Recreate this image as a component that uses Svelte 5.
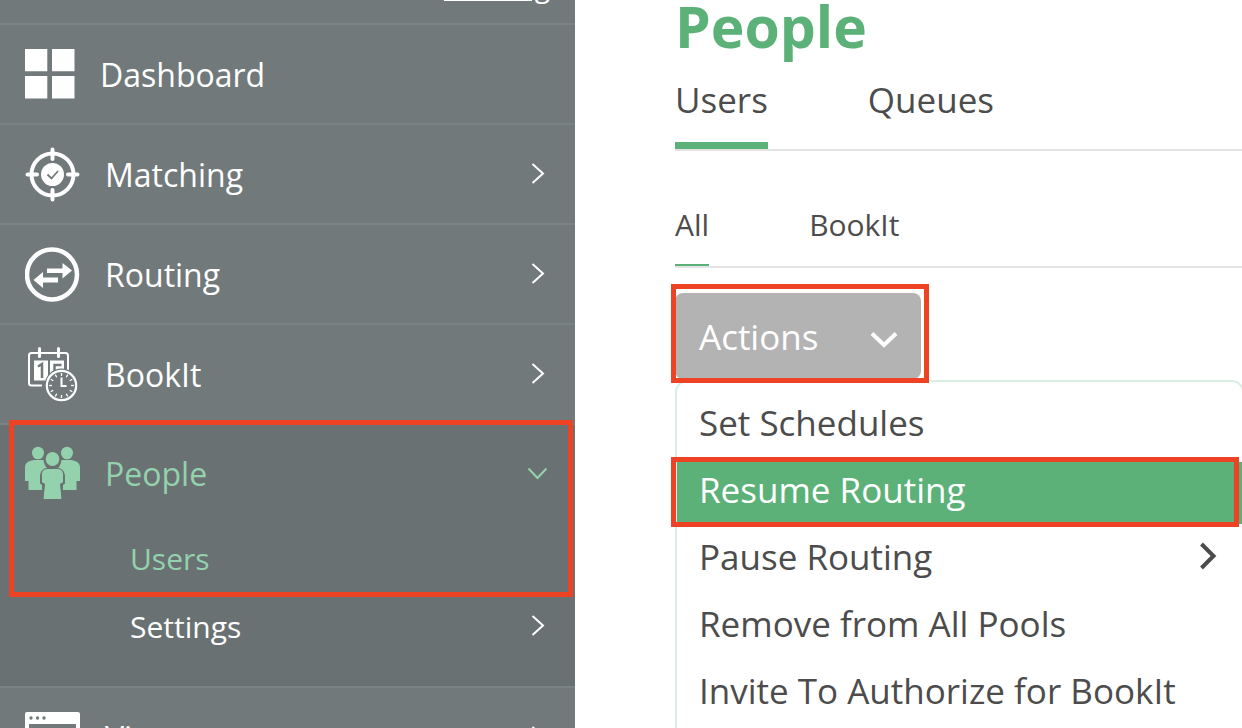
<script>
	const navItems = [
		{ name: 'Dashboard', icon: 'dashboard' },
		{ name: 'Matching', icon: 'matching', expandable: true },
		{ name: 'Routing', icon: 'routing', expandable: true },
		{ name: 'BookIt', icon: 'bookit', expandable: true }
	];

	const tabs = ['Users', 'Queues'];
	const filters = ['All', 'BookIt'];

	const actions = [
		{ name: 'Set Schedules' },
		{ name: 'Resume Routing' },
		{ name: 'Pause Routing', submenu: true },
		{ name: 'Remove from All Pools' },
		{ name: 'Invite To Authorize for BookIt' }
	];

	// Hour marks on the BookIt clock
	const ticks = [0, 30, 60, 90, 120, 150, 180, 210, 240, 270, 300, 330];

	let activeTab = $state('Users');
	let activeFilter = $state('All');
	let activeAction = $state('Resume Routing');
	let menuOpen = $state(true);
</script>

{#snippet arrow()}
	<svg class="arrow" viewBox="0 0 20 22" aria-hidden="true">
		<path d="M4.500 1L15 10.500L4.500 20" />
	</svg>
{/snippet}

{#snippet icon(name)}
	{#if name === 'dashboard'}
		<svg class="icon icon--small" viewBox="0 0 50 50" aria-hidden="true">
			<path fill="currentColor" d="M0 0h22.300v22.300H0zM27 0h22.500v22.300H27zM0 27h22.300v22.500H0zM27 27h22.500v22.500H27z" />
		</svg>
	{:else if name === 'matching'}
		<svg class="icon" viewBox="0 0 55 55" aria-hidden="true">
			<circle cx="27.500" cy="27.500" r="21" fill="none" stroke="currentColor" stroke-width="4" />
			<path d="M27.500 2.500v9.500M27.500 43v9.500M2.500 27.500h9.500M43 27.500h9.500" stroke="currentColor" stroke-width="4" stroke-linecap="round" />
			<circle cx="27.500" cy="27.500" r="11.500" fill="currentColor" />
			<path d="M22.500 27.500l4 4l6.500-7.500" fill="none" stroke="#71797a" stroke-width="1.800" />
		</svg>
	{:else if name === 'routing'}
		<svg class="icon" viewBox="0 0 55 55" aria-hidden="true">
			<circle cx="27" cy="27.500" r="25" fill="none" stroke="currentColor" stroke-width="4.500" />
			<path fill="currentColor" d="M22 21.500h15.500v-5.500l9.500 7.500l-9.500 8v-5.500H22zM33 35.500H18v5.500l-9.500-8l9.500-8v5.500H33z" />
		</svg>
	{:else if name === 'bookit'}
		<svg class="icon" viewBox="0 0 55 55" fill="none" stroke="currentColor" aria-hidden="true">
			<path d="M17 38.500H6.500a2.500 2.500 0 0 1-2.500-2.500V8.500a2.500 2.500 0 0 1 2.500-2.500h34a2.500 2.500 0 0 1 2.500 2.500v15" stroke-width="2" />
			<path d="M14.500 1.500v8M33.500 1.500v8" stroke-width="3" stroke-linecap="round" />
			<path d="M9 13.500h14v20H9zM25 13.500h14v9.500l-8 3l-6 6z" fill="currentColor" stroke="none" />
			<path d="M13 19.500l4-2.500v14M29.500 24v-6h7" stroke="#71797a" stroke-width="2.500" />
			<circle cx="36.500" cy="38.500" r="17" fill="#71797a" stroke="none" />
			<circle cx="36.500" cy="38.500" r="14.700" stroke-width="2.200" />
			<path d="M36.500 30.500v8.500h5" stroke-width="2" />
			{#each ticks as angle}
				<path d="M36.500 26v3" stroke-width="1.300" transform="rotate({angle} 36.500 38.500)" />
			{/each}
		</svg>
	{:else if name === 'people'}
		<svg class="icon" viewBox="0 0 55 55" fill="currentColor" aria-hidden="true">
			<ellipse cx="13" cy="7" rx="6" ry="6.300" />
			<ellipse cx="42" cy="7" rx="6" ry="6.300" />
			<path d="M3.500 44V35H0V21c0-4.500 5-7 11-7h7.500c.5 3.500 1.500 6 3.500 8c-4 1-7 3.500-7 8.500v7l2 1.500v5z" />
			<path d="M51.500 44V35H55V21c0-4.500-5-7-11-7h-7.500c-.5 3.500-1.500 6-3.500 8c4 1 7 3.500 7 8.500v7l-2 1.500v5z" />
			<ellipse cx="27.500" cy="13" rx="6.800" ry="7" />
			<path d="M23 22.500h9c4 0 6.500 2 6.500 6v8l-3 1.500l1.500 15.500H18L19.500 38l-3-1.500v-8c0-4 2.500-6 6.500-6z" stroke="#6a7173" stroke-width="1" />
		</svg>
	{:else if name === 'views'}
		<svg class="icon" viewBox="0 0 55 55" aria-hidden="true">
			<path fill="currentColor" fill-rule="evenodd" d="M2 2h51a2 2 0 0 1 2 2v47a2 2 0 0 1-2 2H2a2 2 0 0 1-2-2V4a2 2 0 0 1 2-2zM4 14v35h47V14z" />
			<g fill="#71797a">
				<circle cx="6" cy="8" r="1.700" />
				<circle cx="12.500" cy="8" r="1.700" />
				<circle cx="19" cy="8" r="1.700" />
			</g>
		</svg>
	{/if}
{/snippet}

<div class="page">
	<nav class="sidebar">
		<div class="sidebar-top">
			<a href="#training">Training</a>
		</div>

		{#each navItems as item}
			<a class="nav-item" href="#{item.icon}">
				{@render icon(item.icon)}
				<span class="nav-name">{item.name}</span>
				{#if item.expandable}
					{@render arrow()}
				{/if}
			</a>
		{/each}

		<div class="nav-section">
			<div class="nav-current highlight">
				<a class="nav-item nav-item--open" href="#people">
					{@render icon('people')}
					<span class="nav-name">People</span>
					<svg class="arrow" viewBox="0 0 20 22" aria-hidden="true">
						<path d="M0.500 5.500L9.500 15L18.500 5.500" />
					</svg>
				</a>
				<a class="sub-item" href="#users">Users</a>
			</div>
			<a class="sub-item" href="#settings">
				<span class="nav-name">Settings</span>
				{@render arrow()}
			</a>
		</div>

		<a class="nav-item" href="#views">
			{@render icon('views')}
			<span class="nav-name">Views</span>
			{@render arrow()}
		</a>
	</nav>

	<main class="content">
		<h1>People</h1>

		<div class="tabs">
			{#each tabs as tab}
				<button class="tab" class:active={activeTab === tab} onclick={() => (activeTab = tab)}>{tab}</button>
			{/each}
		</div>

		<div class="tabs tabs--small">
			{#each filters as filter}
				<button class="tab" class:active={activeFilter === filter} onclick={() => (activeFilter = filter)}>{filter}</button>
			{/each}
		</div>

		<div class="actions highlight">
			<button class="actions-button" aria-expanded={menuOpen} onclick={() => (menuOpen = !menuOpen)}>
				Actions
				<svg class="actions-arrow" viewBox="0 0 28 18" aria-hidden="true">
					<path d="M2 2.500L14 14L26 2.500" />
				</svg>
			</button>
		</div>

		{#if menuOpen}
			<div class="menu">
				{#each actions as action}
					<button
						class="menu-item"
						class:active={activeAction === action.name}
						class:highlight={activeAction === action.name}
						onclick={() => (activeAction = action.name)}
					>
						{action.name}
						{#if action.submenu}
							<svg class="menu-arrow" viewBox="0 0 18 28" aria-hidden="true">
								<path d="M2.500 2L14.500 14L2.500 26" />
							</svg>
						{/if}
					</button>
				{/each}
			</div>
		{/if}
	</main>
</div>

<style>
	:global(body) {
		margin: 0;
		background: #fff;
	}

	.page {
		display: flex;
		height: 100vh;
		overflow: hidden;
		font-family: 'Open Sans', 'Noto Sans', sans-serif;
		color: #4c4c4c;
	}

	button {
		font: inherit;
		color: inherit;
		background: none;
		border: none;
		padding: 0;
		cursor: pointer;
	}

	/* Red callout frame */
	.highlight {
		position: relative;
	}

	.highlight::after {
		content: '';
		position: absolute;
		z-index: 1;
		inset: -5px;
		border: 5px solid #ee4224;
		pointer-events: none;
	}

	.sidebar {
		flex: 0 0 575px;
		background: #71797a;
		color: #fff;
	}

	.sidebar a {
		color: inherit;
	}

	.sidebar-top {
		display: flex;
		justify-content: flex-end;
		align-items: flex-end;
		height: 23px;
		padding-right: 25px;
		border-bottom: 2px solid #7a8384;
		overflow: hidden;
		font-size: 28px;
		line-height: 28px;
	}

	.sidebar-top a {
		margin-bottom: 23px;
	}

	.nav-item,
	.sub-item {
		display: flex;
		align-items: center;
		padding-right: 27px;
		text-decoration: none;
	}

	.nav-item {
		height: 98px;
		padding-left: 25px;
		gap: 25px;
		border-bottom: 2px solid #7a8384;
		font-size: 32px;
	}

	.nav-item--open {
		height: 97px;
		border-bottom-color: transparent;
	}

	.nav-name {
		flex: 1;
	}

	.nav-section {
		padding-bottom: 26px;
		background: #6a7173;
		border-bottom: 2px solid #7a8384;
	}

	.nav-current {
		color: #94d1ad;
	}

	.nav-current::after {
		inset: -5px 2px -5px 9px;
	}

	.sub-item {
		height: 68px;
		padding-left: 130px;
		font-size: 30px;
	}

	.icon {
		flex: none;
		width: 55px;
		height: 55px;
	}

	.icon--small {
		width: 50px;
		height: 50px;
	}

	.arrow {
		flex: none;
		width: 20px;
		height: 22px;
		fill: none;
		stroke: currentColor;
		stroke-width: 2;
	}

	.content {
		flex: 1;
		min-width: 0;
		padding-left: 100px;
	}

	h1 {
		margin: 0;
		padding-bottom: 4px;
		font-size: 57px;
		line-height: 52px;
		color: #5bb177;
	}

	.tabs {
		display: flex;
		gap: 100px;
		border-bottom: 2px solid #e4e4e4;
		font-size: 35px;
	}

	.tab {
		height: 93px;
		border-bottom: 7px solid transparent;
	}

	.tabs--small {
		font-size: 30px;
	}

	.tabs--small .tab {
		height: 115px;
		padding-top: 34px;
		border-bottom-width: 2px;
	}

	.tab.active {
		border-bottom-color: #5bb177;
	}

	.actions {
		width: 246px;
		margin-top: 25px;
	}

	.actions::after {
		inset: -9px -8px -4px -4px;
	}

	.actions-button {
		display: flex;
		align-items: center;
		justify-content: space-between;
		width: 100%;
		height: 86px;
		padding: 0 23px 0 24px;
		border-radius: 8px;
		background: #b3b3b3;
		color: #fff;
		font-size: 35px;
	}

	.actions-arrow {
		width: 28px;
		height: 18px;
		margin-top: 8px;
		fill: none;
		stroke: #fff;
		stroke-width: 4;
	}

	.menu {
		display: flex;
		flex-direction: column;
		gap: 5px;
		margin: 1px -2px 0 0;
		padding: 13px 0;
		border: 2px solid #d9efe3;
		border-radius: 12px;
	}

	.menu-item {
		display: flex;
		align-items: center;
		justify-content: space-between;
		height: 62px;
		padding: 0 25px 8px 22px;
		font-size: 35px;
		white-space: nowrap;
	}

	.menu-item.active {
		background: #5bb177;
		color: #fff;
	}

	.menu-item.active::after {
		inset: -5px 3px -3px -6px;
	}

	.menu-arrow {
		width: 18px;
		height: 28px;
		fill: none;
		stroke: #4c4c4c;
		stroke-width: 4;
	}
</style>
